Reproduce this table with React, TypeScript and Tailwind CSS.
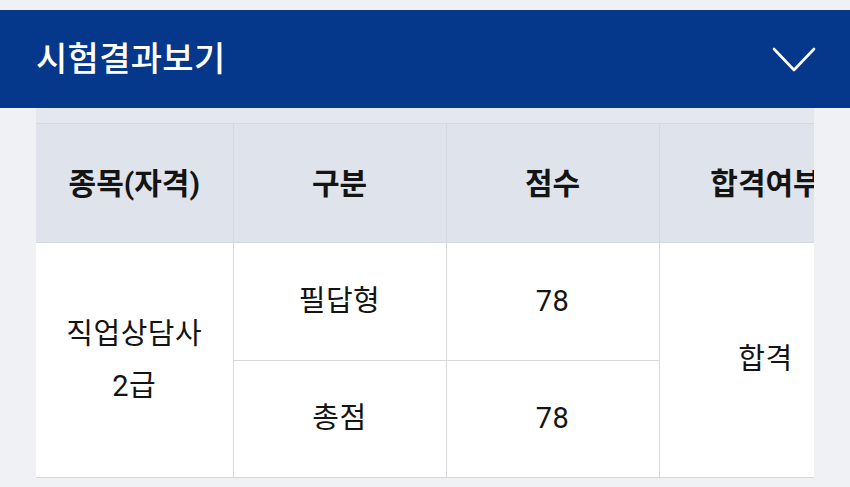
export default function App() {
  const cell = "border border-[#d6d8dd] text-center align-middle";
  return (
    <div
      className="w-[850px] h-[487px] overflow-hidden bg-[#eff1f5] pt-[10px]"
      style={{ fontFamily: 'Roboto, "Noto Sans CJK KR", "Noto Sans", sans-serif' }}
    >
      {/* Header bar */}
      <div className="h-[98px] bg-[#05378a] flex items-center justify-between pl-[36px] pr-[34px]">
        <h1 className="text-[34px] font-medium text-white tracking-[0.3px] leading-none">시험결과보기</h1>
        <svg width="44" height="26" viewBox="0 0 44 26" fill="none" className="mt-[2px]">
          <path d="M2 2 L22 23 L42 2" stroke="white" strokeWidth="2.6" strokeLinecap="round" strokeLinejoin="round" />
        </svg>
      </div>

      {/* Table area */}
      <div className="ml-[36px] w-[778px] overflow-hidden bg-[#e4e7ee] pt-[15px]">
        <table className="border-collapse table-fixed w-[836px] text-[#141414]">
          <colgroup>
            <col className="w-[197px]" />
            <col className="w-[213px]" />
            <col className="w-[213px]" />
            <col className="w-[213px]" />
          </colgroup>
          <thead>
            <tr className="h-[119px] bg-[#dfe3ec] text-[30px] font-bold">
              <th className={`${cell} border-l-0`}>종목(자격)</th>
              <th className={cell}>구분</th>
              <th className={cell}>점수</th>
              <th className={`${cell} whitespace-nowrap`}>합격여부</th>
            </tr>
          </thead>
          <tbody className="bg-white text-[29px] tracking-[0.5px]">
            <tr className="h-[118px]">
              <td rowSpan={2} className={`${cell} border-l-0 leading-[52px]`}>
                직업상담사
                <br />
                2급
              </td>
              <td className={cell}>필답형</td>
              <td className={cell}>78</td>
              <td rowSpan={2} className={cell}>합격</td>
            </tr>
            <tr className="h-[117px]">
              <td className={cell}>총점</td>
              <td className={cell}>78</td>
            </tr>
          </tbody>
        </table>
      </div>
    </div>
  );
}
